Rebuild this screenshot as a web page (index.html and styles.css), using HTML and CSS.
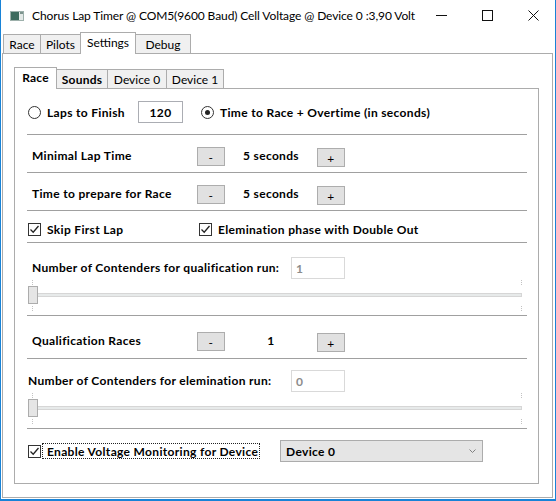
FILE: index.html
```html
<!DOCTYPE html>
<html>
<head>
<meta charset="utf-8">
<link rel="stylesheet" href="styles.css">
</head>
<body>
<div class="window">
  <header class="titlebar">
    <svg class="app-icon" width="14" height="10" viewBox="0 0 14 10">
      <rect x="0" y="0" width="14" height="10" fill="#e3e9e7"/>
      <rect x="0.5" y="0.5" width="13" height="9" fill="none" stroke="#9db0ab"/>
      <rect x="1" y="1" width="8" height="8" fill="#3d6b5e"/>
      <rect x="10" y="1" width="3" height="2" fill="#7d948e"/>
    </svg>
    <span class="title">Chorus Lap Timer @ COM5(9600 Baud) Cell Voltage @ Device 0 :3,90 Volt</span>
    <div class="controls">
      <span class="ctl"><svg width="11" height="11" viewBox="0 0 11 11"><path d="M0 5.5H11" stroke="#111" stroke-width="1"/></svg></span>
      <span class="ctl"><svg width="11" height="11" viewBox="0 0 11 11"><rect x="0.5" y="0.5" width="10" height="10" fill="none" stroke="#111" stroke-width="1"/></svg></span>
      <span class="ctl"><svg width="11" height="11" viewBox="0 0 11 11"><path d="M0.5 0.5L10.5 10.5M10.5 0.5L0.5 10.5" stroke="#111" stroke-width="1"/></svg></span>
    </div>
  </header>

  <nav class="tabstrip outer-strip">
    <div class="tab ot-race">Race</div>
    <div class="tab ot-pilots">Pilots</div>
    <div class="tab ot-settings selected">Settings</div>
    <div class="tab ot-debug">Debug</div>
  </nav>

  <section class="outer-panel">
    <nav class="tabstrip inner-strip">
      <div class="tab itab it-race selected bold">Race</div>
      <div class="tab itab it-sounds bold">Sounds</div>
      <div class="tab itab it-dev0">Device 0</div>
      <div class="tab itab it-dev1">Device 1</div>
    </nav>

    <div class="inner-panel">
      <div class="row r1">
        <label class="opt opt-laps"><span class="radio"></span>Laps to Finish</label>
        <div class="numbox">120</div>
        <label class="opt opt-time"><span class="radio on"><span class="dot"></span></span>Time to Race + Overtime (in seconds)</label>
      </div>

      <div class="row r2">
        <span class="lbl lbl-step">Minimal Lap Time</span>
        <span class="btn">-</span>
        <span class="val">5 seconds</span>
        <span class="btn plus">+</span>
      </div>

      <div class="row r3">
        <span class="lbl lbl-step">Time to prepare for Race</span>
        <span class="btn">-</span>
        <span class="val">5 seconds</span>
        <span class="btn plus">+</span>
      </div>

      <div class="row r4">
        <label class="chk chk-skip"><span class="box"><svg width="11" height="11" viewBox="0 0 11 11"><path d="M1.5 5.5L4.2 8.2L9.5 2" fill="none" stroke="#222" stroke-width="1.3"/></svg></span>Skip First Lap</label>
        <label class="chk"><span class="box"><svg width="11" height="11" viewBox="0 0 11 11"><path d="M1.5 5.5L4.2 8.2L9.5 2" fill="none" stroke="#222" stroke-width="1.3"/></svg></span>Elemination phase with Double Out</label>
      </div>

      <div class="row r5">
        <div class="field">
          <span class="lbl lbl-q">Number of Contenders for qualification run:</span>
          <div class="spin">1</div>
        </div>
        <div class="slider">
          <span class="tick tl"></span><span class="tick bl"></span>
          <span class="tick tr"></span><span class="tick br"></span>
          <span class="track"></span>
          <span class="thumb"></span>
        </div>
      </div>

      <div class="row r6">
        <span class="lbl lbl-step">Qualification Races</span>
        <span class="btn">-</span>
        <span class="val">1</span>
        <span class="btn plus">+</span>
      </div>

      <div class="row r7">
        <div class="field">
          <span class="lbl lbl-e">Number of Contenders for elemination run:</span>
          <div class="spin">0</div>
        </div>
        <div class="slider">
          <span class="tick tl"></span><span class="tick bl"></span>
          <span class="tick tr"></span><span class="tick br"></span>
          <span class="track"></span>
          <span class="thumb"></span>
        </div>
      </div>

      <div class="row r8">
        <label class="chk chk-volt"><span class="box"><svg width="11" height="11" viewBox="0 0 11 11"><path d="M1.5 5.5L4.2 8.2L9.5 2" fill="none" stroke="#222" stroke-width="1.3"/></svg></span><span class="focus">Enable Voltage Monitoring for Device</span></label>
        <div class="combo"><span>Device 0</span><svg width="7" height="4" viewBox="0 0 7 4"><path d="M0.5 0.5L3.5 3.5L6.5 0.5" fill="none" stroke="#808080" stroke-width="1"/></svg></div>
      </div>
    </div>
  </section>
</div>
</body>
</html>
```

FILE: styles.css
```css
* { box-sizing: border-box; }

body {
  margin: 0;
  background: #fff;
  font-family: Lato, "Noto Sans", sans-serif;
  font-size: 12px;
  color: #000;
}

.window {
  width: 556px;
  height: 501px;
  border-left: 1px solid #1883d7;
  border-right: 1px solid #1883d7;
  border-bottom: 2px solid #1883d7;
  display: flex;
  flex-direction: column;
  background: #fff;
  overflow: hidden;
}

/* title bar */
.titlebar {
  height: 31px;
  flex: none;
  display: flex;
  align-items: center;
}
.app-icon { margin-left: 9px; flex: none; }
.title { margin-left: 8px; white-space: nowrap; letter-spacing: -0.1px; }
.controls {
  margin-left: auto;
  margin-right: -1px;
  align-self: stretch;
  display: flex;
}
.ctl {
  width: 46px;
  display: flex;
  align-items: center;
  justify-content: center;
}

/* tabs */
.tabstrip {
  display: flex;
  align-items: flex-end;
  flex: none;
}
.tab {
  height: 19px;
  border: 1px solid #acacac;
  border-bottom: none;
  background: #f0f0f0;
  display: flex;
  align-items: center;
  justify-content: center;
  white-space: nowrap;
  margin-left: -1px;
}
.tab.selected {
  height: 22px;
  margin-bottom: -1px;
  background: #fff;
  position: relative;
  z-index: 1;
  padding-bottom: 2px;
}
.bold { font-weight: bold; letter-spacing: 0.2px; }

.outer-strip { height: 22px; padding-left: 3px; }
.ot-race { width: 38px; }
.ot-pilots { width: 41px; }
.ot-settings { width: 56px; }
.ot-debug { width: 56px; }

.outer-panel {
  flex: 1;
  margin: 0 2px 1px 1px;
  border: 1px solid #acacac;
  padding: 13px 13px 13px 11px;
  display: flex;
  flex-direction: column;
}

.inner-strip { height: 21px; padding-left: 1px; }
.it-race { width: 43px; }
.it-sounds { width: 52px; }
.it-dev0 { width: 60px; }
.it-dev1 { width: 58px; }

.inner-panel {
  flex: 1;
  border: 1px solid #acacac;
  padding: 0 11px 0 12px;
  display: flex;
  flex-direction: column;
}

/* rows */
.row {
  flex: none;
  display: flex;
  align-items: flex-start;
  border-bottom: 1px solid #a0a0a0;
  font-weight: bold;
  letter-spacing: 0.33px;
}
.r1 { height: 46px; padding-top: 12px; }
.r2 { height: 38px; padding-top: 12px; }
.r3 { height: 38px; padding-top: 12px; }
.r4 { height: 32px; padding-top: 12px; }
.r5 { height: 73px; padding-top: 14px; flex-direction: column; }
.r6 { height: 43px; padding-top: 16px; }
.r7 { height: 70px; padding-top: 11px; flex-direction: column; }
.r8 { flex: 1; padding-top: 11px; border-bottom: none; }

/* radio options */
.opt {
  display: flex;
  align-items: center;
  height: 22px;
  white-space: nowrap;
}
.opt-laps { margin-left: 1px; width: 110px; }
.opt-time { margin-left: 18px; }
.radio {
  width: 13px;
  height: 13px;
  border: 1px solid #333;
  border-radius: 50%;
  background: #fff;
  margin-right: 6px;
  display: flex;
  align-items: center;
  justify-content: center;
  flex: none;
}
.dot {
  width: 5px;
  height: 5px;
  border-radius: 50%;
  background: #222;
}
.numbox {
  width: 45px;
  height: 22px;
  border: 1px solid #abadb3;
  display: flex;
  align-items: center;
  justify-content: center;
}

/* stepper rows */
.lbl { white-space: nowrap; line-height: 17px; }
.lbl-step { margin-left: 5px; width: 165px; }
.btn {
  width: 28px;
  height: 19px;
  border: 1px solid #adadad;
  background: #e1e1e1;
  font-weight: normal;
  display: flex;
  align-items: center;
  justify-content: center;
  padding-top: 2px;
}
.plus { margin-top: 1px; }
.val { width: 92px; text-align: center; line-height: 17px; }

/* checkboxes */
.chk {
  display: flex;
  align-items: center;
  height: 13px;
  white-space: nowrap;
}
.chk-skip { margin-left: 1px; width: 171px; }
.box {
  width: 13px;
  height: 13px;
  border: 1px solid #333;
  background: #fff;
  margin-right: 6px;
  flex: none;
  display: flex;
  align-items: center;
  justify-content: center;
}
.chk-volt { margin-left: 1px; width: 252px; height: 22px; }
.chk-volt .box { margin-right: 1px; }
.focus {
  border: 1px dotted #222;
  height: 16px;
  padding: 0 1px 0 4px;
  display: flex;
  align-items: center;
}

/* number fields + sliders */
.field { display: flex; align-items: center; height: 22px; }
.field .lbl { line-height: 22px; }
.lbl-q { margin-left: 5px; width: 259px; }
.lbl-e { margin-left: 1px; width: 263px; }
.spin {
  width: 54px;
  height: 22px;
  border: 1px solid #d9d9d9;
  color: #8c8c8c;
  padding-left: 4px;
  display: flex;
  align-items: center;
}
.slider {
  position: relative;
  margin-left: 1px;
  margin-top: 1px;
  width: 494px;
  height: 32px;
}
.track {
  position: absolute;
  left: 0;
  right: 0;
  top: 13px;
  height: 4px;
  background: #e7eaea;
  border: 1px solid #d6d6d6;
}
.thumb {
  position: absolute;
  left: 0;
  top: 6px;
  width: 10px;
  height: 18px;
  background: #e5e5e5;
  border: 1px solid #acacac;
}
.tick {
  position: absolute;
  width: 1px;
  height: 5px;
  border-left: 1px dotted #c2c2c2;
}
.tl { left: 4px; top: 0; }
.bl { left: 4px; top: 26px; }
.tr { left: 493px; top: 0; }
.br { left: 493px; top: 26px; }

/* combo */
.combo {
  width: 203px;
  height: 22px;
  border: 1px solid #acacac;
  background: #e5e5e5;
  display: flex;
  align-items: center;
  justify-content: space-between;
  padding: 0 6px 0 5px;
}
```
